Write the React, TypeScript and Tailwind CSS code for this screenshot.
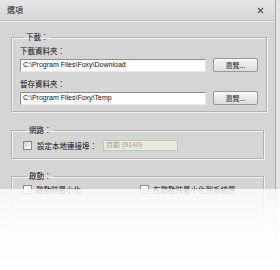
import { X } from 'lucide-react'

const CJK = "font-['Noto_Sans_CJK_TC','Noto_Sans_CJK_SC',sans-serif]"
const LAT = "font-['Liberation_Sans','Noto_Sans_CJK_TC',sans-serif]"

function Group({ title, className, children }: { title: string; className: string; children: React.ReactNode }) {
  return (
    <fieldset className={`mx-[11px] border border-[#b3b3b3] shadow-[inset_1px_1px_0_#f2f2f2,1px_1px_0_#f2f2f2] ${className}`}>
      <legend className={`ml-[4px] px-[2px] text-[7.5px] leading-[8px] text-[#111] ${CJK}`}>{title}</legend>
      {children}
    </fieldset>
  )
}

function PathRow({ label, value }: { label: string; value: string }) {
  return (
    <div className="flex flex-col">
      <span className={`text-[7.5px] leading-[9px] text-[#111] ${CJK}`}>{label}</span>
      <div className="mt-[3px] flex items-center">
        <div className={`flex h-[13px] w-[186px] items-center border border-[#8e8e8e] border-r-[#e8e8e8] border-b-[#e8e8e8] bg-white px-[2px] text-[7px] text-[#111] ${LAT}`}>
          {value}
        </div>
        <button className={`ml-[7px] flex h-[14px] w-[45px] items-center justify-center rounded-[2px] border border-[#9a9a9a] bg-gradient-to-b from-[#f8f8f8] to-[#dcdcdc] text-[7px] text-[#111] ${CJK}`}>
          瀏覽...
        </button>
      </div>
    </div>
  )
}

export default function App() {
  return (
    <div className="relative h-[270px] w-[280px] overflow-hidden bg-[#e4e4e4]">
      <div className="flex h-full w-[276px] flex-col border-r border-[#a8a8a8] bg-[#d5d5d5]">
        {/* Title */}
        <div className="flex h-[21px] shrink-0 items-center justify-between border-b border-[#bdbdbd] bg-gradient-to-b from-[#e6e6e6] to-[#d6d6d6] pl-[7px] pr-[10px] shadow-[0_1px_0_#ececec]">
          <span className={`text-[8px] text-[#222] ${CJK}`}>選項</span>
          <X size={9} strokeWidth={3} className="text-[#555]" />
        </div>

        <div className="flex flex-col pt-[12px]">
          <Group title="下載：" className="h-[79px] px-[8px] pt-[5px]">
            <div className="flex flex-col gap-[7px]">
              <PathRow label="下載資料夾：" value="C:\Program Files\Foxy\Download" />
              <PathRow label="暫存資料夾：" value="C:\Program Files\Foxy\Temp" />
            </div>
          </Group>

          <Group title="網路：" className="mt-[14px] h-[33px] px-[11px] pt-[6px]">
            <div className="flex items-center">
              <span className="h-[9px] w-[9px] border border-[#8a8a8a] bg-gradient-to-br from-[#cfcfcf] to-[#fdfdfd]" />
              <span className={`ml-[5px] text-[7.5px] text-[#111] ${CJK}`}>設定本地連接埠：</span>
              <div className={`ml-[6px] flex h-[11px] w-[75px] items-center border border-[#c9c6b3] bg-[#ebe9dc] px-[2px] text-[7px] text-[#a5a59a] ${LAT}`}>
                自動 (8140)
              </div>
            </div>
          </Group>

          <Group title="啟動：" className="mt-[13px] h-[60px] px-[11px] pt-[4px]">
            <div className="flex items-center whitespace-nowrap">
              <span className="h-[9px] w-[9px] shrink-0 border border-[#8a8a8a] bg-white" />
              <span className={`ml-[4px] w-[104px] text-[7.5px] text-[#111] ${CJK}`}>啟動時最小化</span>
              <span className="h-[9px] w-[9px] shrink-0 border border-[#8a8a8a] bg-white" />
              <span className={`ml-[4px] text-[7.5px] text-[#111] ${CJK}`}>在啟動時最小化到系統匣</span>
            </div>
          </Group>
        </div>
      </div>

      {/* fade */}
      <div className="absolute inset-x-0 bottom-0 top-[189px] bg-gradient-to-b from-white/80 via-white/95 to-white" />
    </div>
  )
}
